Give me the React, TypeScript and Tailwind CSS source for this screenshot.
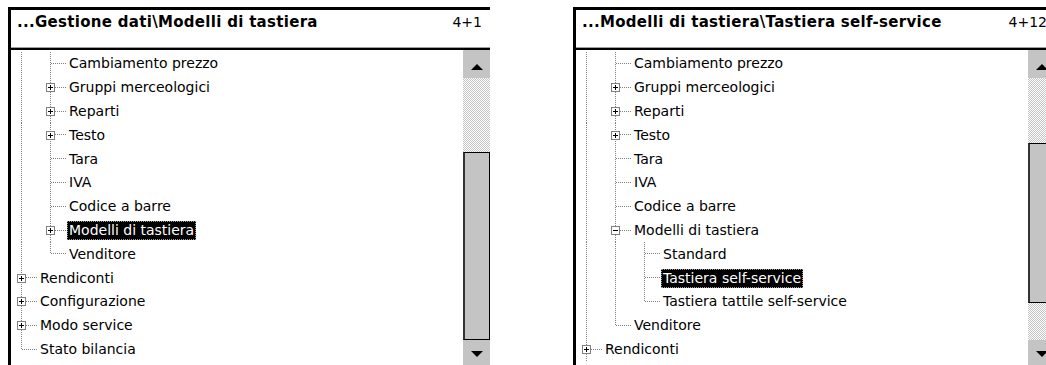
import React from "react";

type Node = {
    label: string;
    cont: boolean[];
    box?: "+" | "-";
    last?: boolean;
    selected?: boolean;
};

const leftTree: Node[] = [
    { label: "Cambiamento prezzo", cont: [true] },
    { label: "Gruppi merceologici", cont: [true], box: "+" },
    { label: "Reparti", cont: [true], box: "+" },
    { label: "Testo", cont: [true], box: "+" },
    { label: "Tara", cont: [true] },
    { label: "IVA", cont: [true] },
    { label: "Codice a barre", cont: [true] },
    { label: "Modelli di tastiera", cont: [true], box: "+", selected: true },
    { label: "Venditore", cont: [true], last: true },
    { label: "Rendiconti", cont: [], box: "+" },
    { label: "Configurazione", cont: [], box: "+" },
    { label: "Modo service", cont: [], box: "+" },
    { label: "Stato bilancia", cont: [], last: true },
];

const rightTree: Node[] = [
    { label: "Cambiamento prezzo", cont: [true] },
    { label: "Gruppi merceologici", cont: [true], box: "+" },
    { label: "Reparti", cont: [true], box: "+" },
    { label: "Testo", cont: [true], box: "+" },
    { label: "Tara", cont: [true] },
    { label: "IVA", cont: [true] },
    { label: "Codice a barre", cont: [true] },
    { label: "Modelli di tastiera", cont: [true], box: "-" },
    { label: "Standard", cont: [true, true] },
    { label: "Tastiera self-service", cont: [true, true], selected: true },
    { label: "Tastiera tattile self-service", cont: [true, true], last: true },
    { label: "Venditore", cont: [true], last: true },
    { label: "Rendiconti", cont: [], box: "+" },
];

const dots = { stroke: "#808080", strokeWidth: 1, strokeDasharray: "1 1" };

function Guide({ full }: { full: boolean }) {
    return (
        <svg width="29" height="100%" className="shrink-0" shapeRendering="crispEdges">
            {full && <line x1="10.5" y1="0" x2="10.5" y2="100%" {...dots} />}
        </svg>
    );
}

// connector lines + expand box, stacked in one grid cell
function Connector({ node }: { node: Node }) {
    return (
        <div className="grid w-[27px] shrink-0">
            <svg className="col-start-1 row-start-1 w-full h-full" shapeRendering="crispEdges">
                <line x1="10.5" y1="0" x2="10.5" y2="50%" {...dots} />
                {!node.last && <line x1="10.5" y1="50%" x2="10.5" y2="100%" {...dots} />}
                <line x1="11" y1="50%" x2="27" y2="50%" {...dots} />
            </svg>
            {node.box && (
                <div className="col-start-1 row-start-1 self-center ml-[6px] w-[9px] h-[9px] border border-[#808080] bg-white flex items-center justify-center">
                    <svg width="5" height="5" viewBox="0 0 5 5" shapeRendering="crispEdges">
                        <rect x="0" y="2" width="5" height="1" fill="#000" />
                        {node.box === "+" && <rect x="2" y="0" width="1" height="5" fill="#000" />}
                    </svg>
                </div>
            )}
        </div>
    );
}

function TreeRow({ node }: { node: Node }) {
    return (
        <div className="flex h-[23.8px] items-stretch">
            {node.cont.map((c, i) => (
                <Guide key={i} full={c} />
            ))}
            <Connector node={node} />
            <div className="flex items-center">
                <span
                    className={
                        node.selected
                            ? "h-[19px] px-[1px] leading-[17px] whitespace-nowrap bg-black text-white border border-dotted border-[#9a9a9a]"
                            : "h-[19px] px-[2px] leading-[19px] whitespace-nowrap text-black"
                    }
                >
                    {node.label}
                </span>
            </div>
        </div>
    );
}

function Arrow({ up }: { up: boolean }) {
    return (
        <svg width="12" height="6" viewBox="0 0 12 6">
            <polygon points={up ? "6,0 12,6 0,6" : "0,0 12,0 6,6"} fill="#000" />
        </svg>
    );
}

function ScrollBar({ before, thumb }: { before: number; thumb: number }) {
    return (
        <div className="w-[27px] shrink-0 flex flex-col h-[318px]">
            <div className="h-[28px] bg-[#c4c4c4] flex items-center justify-center pt-[6px]">
                <Arrow up />
            </div>
            <div
                className="bg-[repeating-conic-gradient(#c4c4c4_0_25%,#ffffff_0_50%)] bg-[length:2px_2px]"
                style={{ height: before }}
            />
            <div
                className="bg-[#c4c4c4] border border-black border-l-2 border-l-[#333]"
                style={{ height: thumb }}
            />
            <div className="flex-1 bg-[repeating-conic-gradient(#c4c4c4_0_25%,#ffffff_0_50%)] bg-[length:2px_2px]" />
            <div className="h-[28px] bg-[#c4c4c4] flex items-start justify-center pt-[11px]">
                <Arrow up={false} />
            </div>
        </div>
    );
}

function Panel({
    title,
    count,
    tree,
    before,
    thumb,
}: {
    title: string;
    count: string;
    tree: Node[];
    before: number;
    thumb: number;
}) {
    return (
        <div className="w-[482px] shrink-0 border-t-[3px] border-l-[3px] border-black">
            <div className="h-[37px] flex justify-between pl-[6px] pr-[8px] pt-[3px]">
                <span className="font-bold text-[15px] tracking-[0.3px] leading-[18px] whitespace-nowrap">
                    {title}
                </span>
                <span className="text-[14px] leading-[18px]">{count}</span>
            </div>
            <div className="h-px bg-[#a0a0a0]" />
            <div className="h-[2px] bg-black" />
            <div className="flex">
                <div className="flex-1 pt-[2px] text-[14px]">
                    {tree.map((n, i) => (
                        <TreeRow key={i} node={n} />
                    ))}
                </div>
                <ScrollBar before={before} thumb={thumb} />
            </div>
        </div>
    );
}

export default function App() {
    return (
        <div className="w-[1046px] h-[365px] overflow-hidden bg-white flex gap-[83px] pt-[7px] pl-[8px] font-['DejaVu_Sans',sans-serif] text-black">
            <Panel
                title="...Gestione dati\Modelli di tastiera"
                count="4+1"
                tree={leftTree}
                before={74}
                thumb={188}
            />
            <Panel
                title="...Modelli di tastiera\Tastiera self-service"
                count="4+12"
                tree={rightTree}
                before={65}
                thumb={160}
            />
        </div>
    );
}
